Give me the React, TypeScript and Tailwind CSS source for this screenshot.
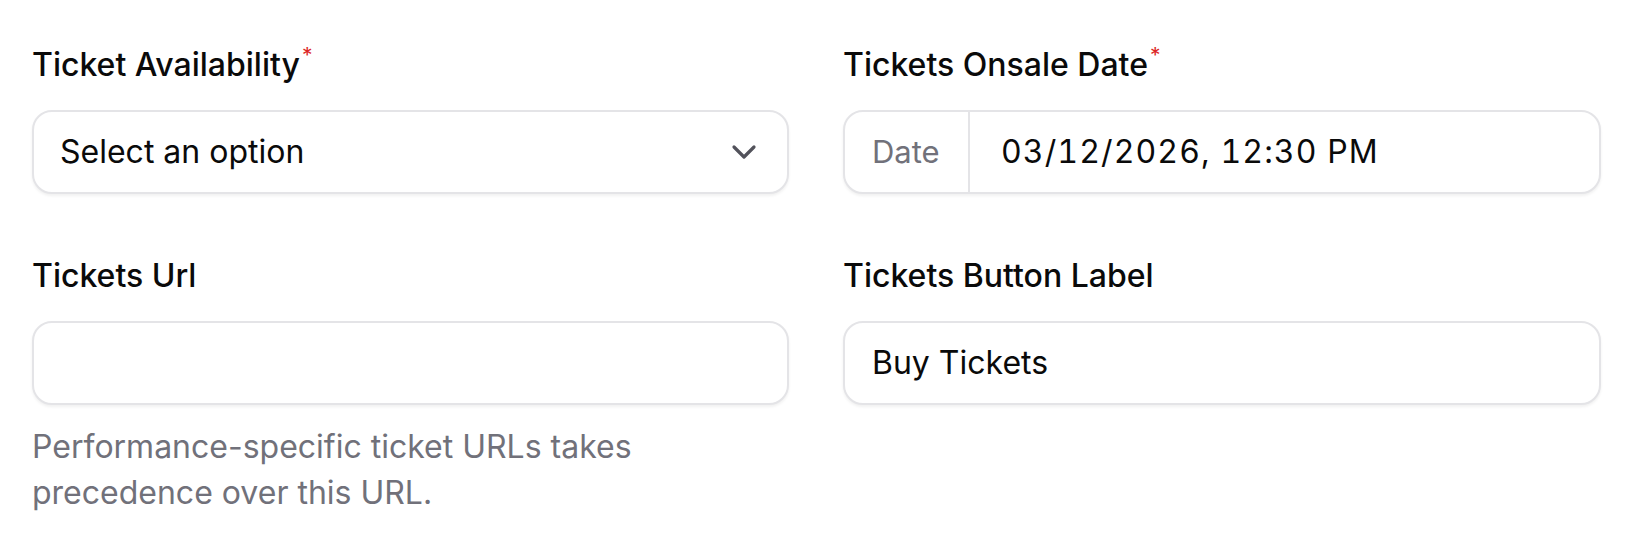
const font = { fontFamily: 'Inter, "Noto Sans", sans-serif' };

function Label({ text, required }: { text: string; required?: boolean }) {
  return (
    <div className="h-[40px] text-[32px] font-medium leading-[40px] text-[#0a0a0a]">
      {text}
      {required && <span className="relative -top-[13px] ml-[2px] text-[21px] font-normal text-[#dc2626]">*</span>}
    </div>
  );
}

function Box({ children }: { children?: React.ReactNode }) {
  return (
    <div className="mt-[25px] flex h-[84px] items-center rounded-[20px] border-2 border-[#e4e4e7] bg-white shadow-[0_2px_3px_rgba(0,0,0,0.06)]">
      {children}
    </div>
  );
}

export default function App() {
  return (
    <div className="min-h-[534px] bg-white pl-[32px] pt-[45px]" style={font}>
      <div className="grid grid-cols-[757px_758px] gap-x-[54px]">
        <div>
          <Label text="Ticket Availability" required />
          <Box>
            <span className="flex-1 pl-[26px] text-[32px] text-[#0a0a0a]">Select an option</span>
            <svg className="mr-[30px]" width="26" height="16" viewBox="0 0 26 16" fill="none">
              <path d="M3 3l10 10L23 3" stroke="#52525b" strokeWidth="3.2" strokeLinecap="round" strokeLinejoin="round" />
            </svg>
          </Box>
        </div>
        <div>
          <Label text="Tickets Onsale Date" required />
          <Box>
            <div className="flex h-full w-[125px] items-center border-r-2 border-[#e4e4e7] pl-[27px] text-[31px] text-[#71717a]">
              Date
            </div>
            <span className="pl-[31px] text-[32px] tabular-nums tracking-[1.1px] text-[#0a0a0a]">03/12/2026, 12:30 PM</span>
          </Box>
        </div>
        <div className="mt-[62px]">
          <Label text="Tickets Url" />
          <Box />
          <p className="mt-[19px] w-[640px] text-[32px] leading-[46px] text-[#71717a]">
            Performance-specific ticket URLs takes precedence over this URL.
          </p>
        </div>
        <div className="mt-[62px]">
          <Label text="Tickets Button Label" />
          <Box>
            <span className="pl-[27px] text-[32px] text-[#0a0a0a]">Buy Tickets</span>
          </Box>
        </div>
      </div>
    </div>
  );
}
